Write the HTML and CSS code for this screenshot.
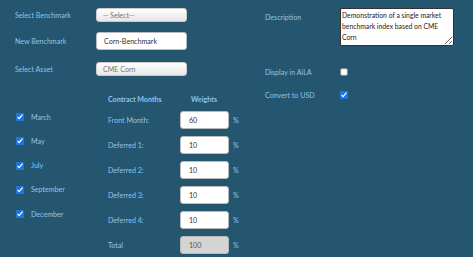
FILE: index.html
```html
<!DOCTYPE html>
<html>
<head>
    <title>Benchmark Setup</title>
    <meta charset="UTF-8">
    <link rel="stylesheet" href="styles.css">
</head>
<body>
    <form class="page">
        <div class="top">
            <div class="col">
                <div class="row r1">
                    <label class="lbl">Select Benchmark</label>
                    <select class="pick"><option>-- Select--</option></select>
                </div>
                <div class="row r2">
                    <label class="lbl">New Benchmark</label>
                    <input class="txt" type="text" value="Corn-Benchmark">
                </div>
                <div class="row r3">
                    <label class="lbl">Select Asset</label>
                    <select class="pick"><option>CME Corn</option></select>
                </div>
            </div>
            <div class="col right">
                <div class="row desc">
                    <label class="lbl">Description</label>
                    <textarea class="note">Demonstration of a single market benchmark index based on CME Corn</textarea>
                </div>
                <div class="row r-aila">
                    <label class="lbl">Display in AiLA</label>
                    <input class="box" type="checkbox">
                </div>
                <div class="row r-usd">
                    <label class="lbl">Convert to USD</label>
                    <input class="box" type="checkbox" checked>
                </div>
            </div>
        </div>

        <div class="bottom">
            <div class="months">
                <label class="month"><input class="box" type="checkbox" checked> March</label>
                <label class="month"><input class="box" type="checkbox" checked> May</label>
                <label class="month"><input class="box" type="checkbox" checked> July</label>
                <label class="month"><input class="box" type="checkbox" checked> September</label>
                <label class="month"><input class="box" type="checkbox" checked> December</label>
            </div>
            <div class="weights">
                <div class="head">Contract Months</div>
                <div class="head wh">Weights</div>
                <div></div>

                <div class="lbl">Front Month:</div>
                <input class="txt w" type="text" value="60">
                <span class="pct">%</span>

                <div class="lbl">Deferred 1:</div>
                <input class="txt w" type="text" value="10">
                <span class="pct">%</span>

                <div class="lbl">Deferred 2:</div>
                <input class="txt w" type="text" value="10">
                <span class="pct">%</span>

                <div class="lbl">Deferred 3:</div>
                <input class="txt w" type="text" value="10">
                <span class="pct">%</span>

                <div class="lbl">Deferred 4:</div>
                <input class="txt w" type="text" value="10">
                <span class="pct">%</span>

                <div class="lbl">Total</div>
                <input class="txt w total" type="text" value="100" readonly>
                <span class="pct">%</span>
            </div>
        </div>
    </form>
</body>
</html>
```

FILE: styles.css
```css
html, body { margin: 0; padding: 0; }
body { background: #255670; font-family: Lato, "Open Sans", sans-serif; font-size: 7.1px; color: #8ec4ea; width: 473px; height: 257px; overflow: hidden; }
.page { padding: 8px 0 0 15px; }
.top { display: flex; }
.col { width: 250px; flex: none; }
.right { width: auto; }
.row { display: flex; align-items: center; }
.lbl { width: 81px; flex: none; }
.right .lbl { width: 75px; }
.r1 { height: 14px; }
.r2 { height: 18px; margin-top: 10px; }
.r3 { height: 14px; margin-top: 12px; }
.desc { align-items: flex-start; height: 38px; }
.desc .lbl { padding-top: 5px; }
.r-aila { height: 12px; margin-top: 20px; }
.r-usd { height: 12px; margin-top: 11px; }
.pick { width: 91px; height: 14px; padding: 0 0 0 6px; border: 1px solid #ccc; border-radius: 3px; background: linear-gradient(#fff, #e6e6e6); color: #777; font: inherit; appearance: none; -webkit-appearance: none; }
.txt { box-sizing: border-box; width: 91px; height: 18px; padding: 0 0 0 7px; border: 1px solid #bbb; border-radius: 3px; background: #fff; color: #333; font: inherit; }
.note { box-sizing: border-box; width: 114px; height: 38px; padding: 1px 1px; border: 1px solid #333; border-radius: 2px; background: #fff; color: #222; font: inherit; font-size: 6.8px; line-height: 11px; resize: both; overflow: hidden; }
.box { width: 8px; height: 8px; margin: 0; accent-color: #1a73e8; }
.bottom { display: flex; margin-top: -5px; }
.months { display: flex; flex-direction: column; gap: 16.3px; width: 92px; padding-top: 17px; padding-left: 1px; }
.month { display: flex; align-items: center; gap: 7px; height: 8px; }
.weights { display: grid; grid-template-columns: 72px 49px 12px; row-gap: 7px; align-items: center; }
.head { font-weight: bold; height: 12px; line-height: 12px; margin: -2px 0 -2px; }
.wh { padding-left: 11px; }
.weights .lbl { width: auto; }
.w { width: 49px; padding-left: 8px; }
.total { background: #d4d4d4; color: #555; }
.pct { padding-left: 4px; }
```
